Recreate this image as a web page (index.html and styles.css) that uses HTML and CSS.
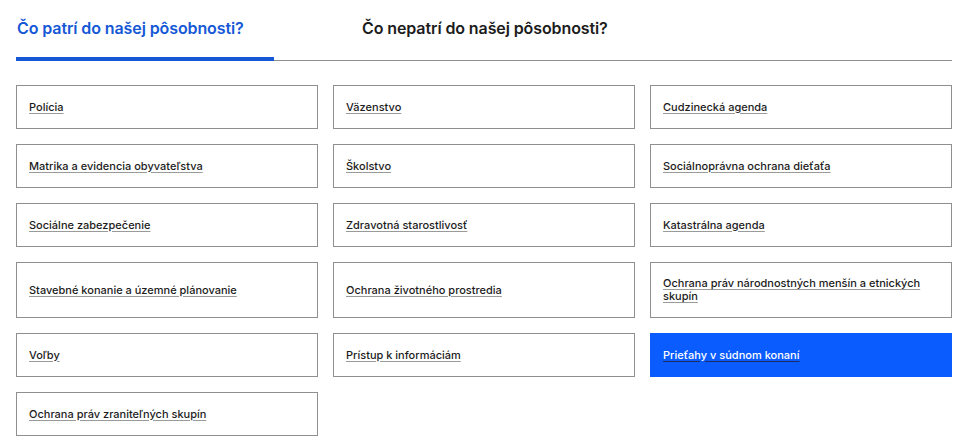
FILE: index.html
```html
<!DOCTYPE html>
<html lang="sk">
<head>
<meta charset="utf-8">
<title>Pôsobnosť</title>
<link rel="stylesheet" href="styles.css">
</head>
<body>
<div class="page">
  <div class="tabs">
    <a class="tab tab-active" href="#">Čo patrí do našej pôsobnosti?</a>
    <a class="tab" href="#">Čo nepatrí do našej pôsobnosti?</a>
  </div>
  <div class="grid">
    <a class="card" href="#"><span>Polícia</span></a>
    <a class="card" href="#"><span>Väzenstvo</span></a>
    <a class="card" href="#"><span>Cudzinecká agenda</span></a>
    <a class="card" href="#"><span>Matrika a evidencia obyvateľstva</span></a>
    <a class="card" href="#"><span>Školstvo</span></a>
    <a class="card" href="#"><span>Sociálnoprávna ochrana dieťaťa</span></a>
    <a class="card" href="#"><span>Sociálne zabezpečenie</span></a>
    <a class="card" href="#"><span>Zdravotná starostlivosť</span></a>
    <a class="card" href="#"><span>Katastrálna agenda</span></a>
    <a class="card" href="#"><span>Stavebné konanie a územné plánovanie</span></a>
    <a class="card" href="#"><span>Ochrana životného prostredia</span></a>
    <a class="card" href="#"><span>Ochrana práv národnostných menšín a etnických skupín</span></a>
    <a class="card" href="#"><span>Voľby</span></a>
    <a class="card" href="#"><span>Prístup k informáciám</span></a>
    <a class="card card-active" href="#"><span>Prieťahy v súdnom konaní</span></a>
    <a class="card" href="#"><span>Ochrana práv zraniteľných skupín</span></a>
  </div>
</div>
</body>
</html>
```

FILE: styles.css
```css
* { box-sizing: border-box; }
html, body { margin: 0; padding: 0; background: #fff; }
body { font-family: Inter, "Noto Sans", "Liberation Sans", sans-serif; color: #1c1c1c; }
.page { padding: 0 16px; }
.tabs {
  display: flex;
  border-bottom: 1px solid #8f8f8f;
  padding-top: 17px;
}
.tab {
  display: block;
  font-size: 16px;
  font-weight: 600;
  line-height: 22px;
  letter-spacing: -0.1px;
  color: #1c1c1c;
  text-decoration: none;
  padding: 0 0 18px 1px;
  margin-bottom: -1px;
  border-bottom: 4px solid transparent;
}
.tab-active {
  color: #1558d6;
  border-bottom-color: #1558d6;
  width: 258px;
  margin-right: 87px;
}
.grid {
  display: grid;
  grid-template-columns: repeat(3, 1fr);
  gap: 15px;
  margin-top: 24px;
}
.card {
  display: flex;
  align-items: center;
  border: 1px solid #8f8f8f;
  padding: 14px 12px;
  min-height: 44px;
  font-size: 11px;
  font-weight: 500;
  line-height: 13px;
  color: #1c1c1c;
  text-decoration: none;
}
.card span {
  text-decoration: underline;
  text-decoration-color: #9a9a9a;
  text-underline-offset: 2px;
}
.card-active {
  background: #0a5cff;
  border-color: #0a5cff;
  color: #fff;
}
.card-active span { text-decoration-color: #1a2b66; }
```
